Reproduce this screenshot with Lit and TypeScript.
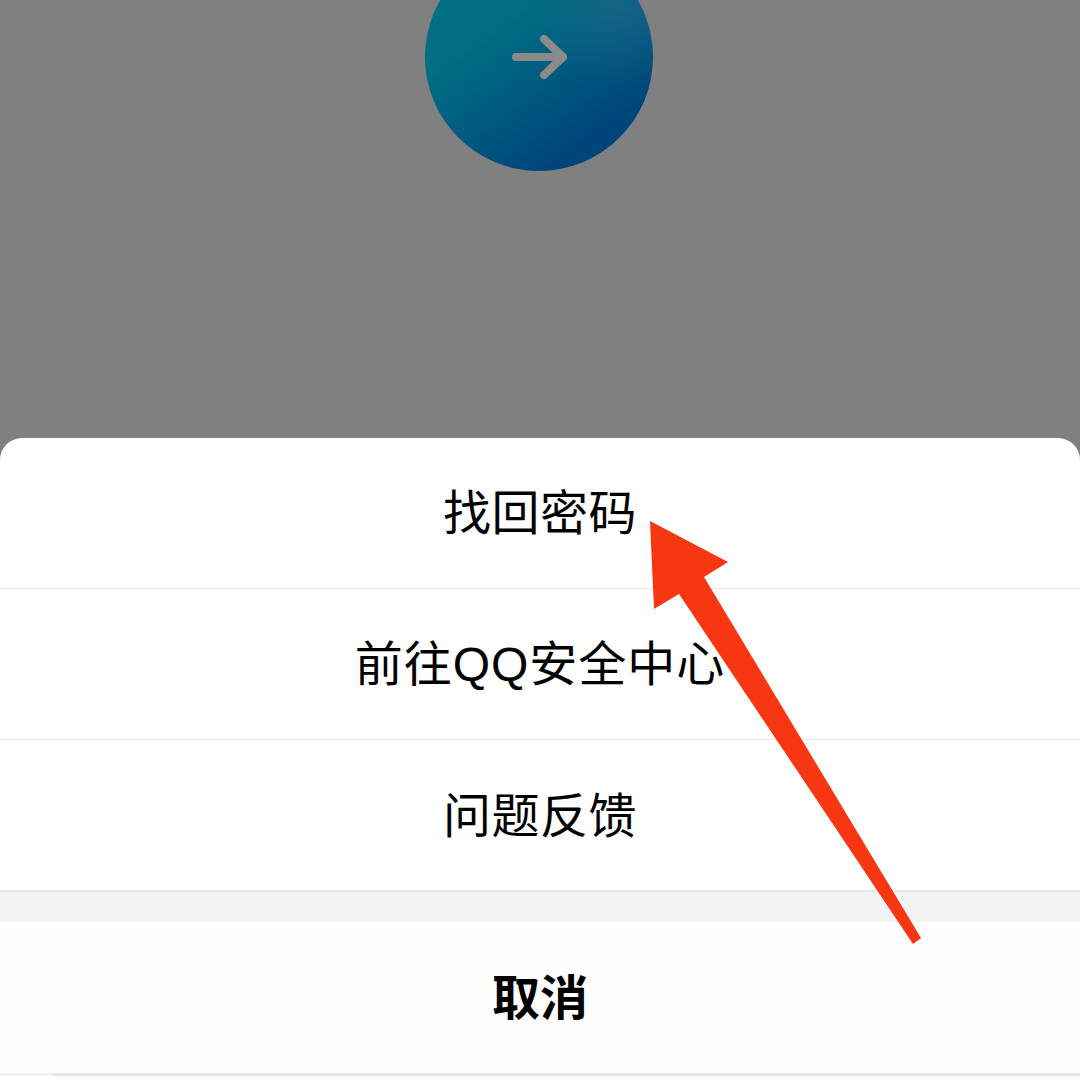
import { LitElement, html, css } from "lit";
import { customElement } from "lit/decorators.js";

@customElement("app-root")
export class AppRoot extends LitElement {
  static styles = css`
    :host {
      display: block;
      position: relative;
      width: 1080px;
      height: 1080px;
      overflow: hidden;
      background: #fff;
      font-family: "Liberation Sans", "Noto Sans CJK SC", sans-serif;
      color: #000;
    }
    .backdrop {
      height: 460px;
      background: #808080;
      display: flex;
      justify-content: center;
      align-items: flex-start;
    }
    .circle {
      width: 228px;
      height: 228px;
      margin-top: -57px;
      margin-left: -2px;
      border-radius: 50%;
      background:
        radial-gradient(circle at 85% 28%, rgba(40, 105, 140, 0.55), rgba(40, 105, 140, 0) 32%),
        linear-gradient(145deg, #006f84 34%, #00457a 80%);
      display: flex;
      align-items: center;
      justify-content: center;
    }
    .arrow-icon {
      width: 60px;
      height: 48px;
      display: block;
    }
    .sheet {
      margin-top: -22px;
      position: relative;
      background: #fff;
      border-radius: 22px 22px 0 0;
      display: flex;
      flex-direction: column;
    }
    .row {
      box-sizing: border-box;
      height: 151px;
      padding-bottom: 8px;
      display: flex;
      align-items: center;
      justify-content: center;
      font-size: 48px;
      letter-spacing: 0.5px;
      border-bottom: 1px solid #e9e9e9;
    }
    .row.wide {
      letter-spacing: 1px;
    }
    .row.last {
      border-bottom: 2px solid #e8e8e8;
      height: 152px;
      padding-bottom: 6px;
    }
    .gap {
      height: 30px;
      background: #f3f3f3;
    }
    .cancel {
      height: 150px;
      padding-bottom: 7px;
      box-sizing: border-box;
      display: flex;
      align-items: center;
      justify-content: center;
      font-size: 48px;
      font-weight: 700;
      background: #fefefe;
    }
    .home {
      height: 3px;
      margin-top: 1px;
      background: linear-gradient(#f1f1f1, #f1f1f1) 0 0 / 52px 100% no-repeat, #e6e6e6;
    }
    .pointer {
      position: absolute;
      inset: 0;
      width: 1080px;
      height: 1080px;
      pointer-events: none;
    }
  `;

  render() {
    return html`
      <div class="backdrop">
        <div class="circle">
          <svg class="arrow-icon" viewBox="0 0 60 48" fill="none" stroke="#8a8a8a" stroke-width="8" stroke-linecap="round" stroke-linejoin="round">
            <path d="M7 24H54" />
            <path d="M35 6L54 24L35 42" />
          </svg>
        </div>
      </div>
      <div class="sheet">
        <div class="row">找回密码</div>
        <div class="row wide">前往QQ安全中心</div>
        <div class="row last">问题反馈</div>
        <div class="gap"></div>
        <div class="cancel">取消</div>
        <div class="home"></div>
      </div>
      <svg class="pointer" viewBox="0 0 1080 1080">
        <polygon fill="#f63711" points="650,521 728,562 704,577 921,938 913,944 679,594 654,609" />
      </svg>
    `;
  }
}
